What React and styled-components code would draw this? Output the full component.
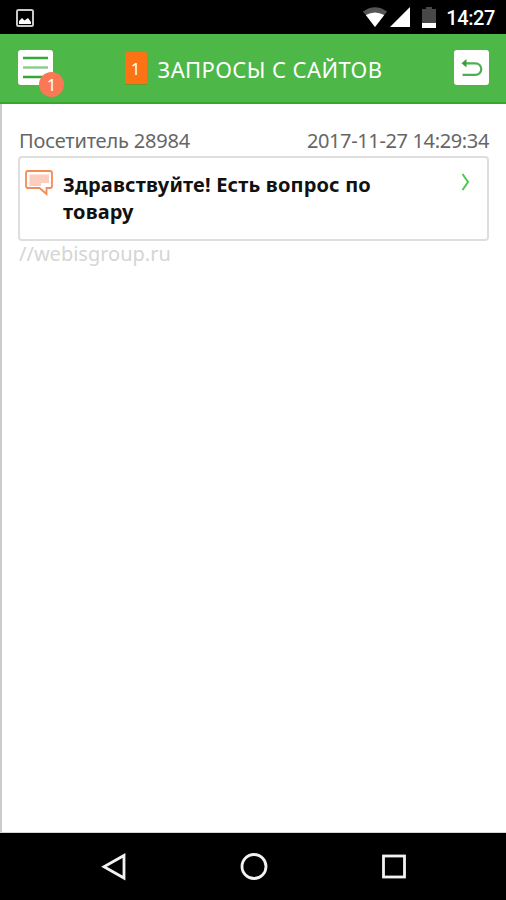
import React from 'react';
import styled, { createGlobalStyle } from 'styled-components';

const requests = [
  {
    id: 28984,
    visitor: 'Посетитель 28984',
    date: '2017-11-27 14:29:34',
    message: 'Здравствуйте! Есть вопрос по товару',
    site: '//webisgroup.ru',
  },
];

function StatusBar() {
  return (
    <Status>
      <svg className="picture" width="18" height="18" viewBox="0 0 18 18">
        <rect x="1" y="1" width="16" height="16" rx="1.5" fill="none" stroke="#c9c9c9" strokeWidth="2" />
        <path d="M3 15v-3l3-3 2.500 2.500L12 9l3 4v2z" fill="#fff" />
      </svg>
      <div className="indicators">
        <svg width="24" height="20" viewBox="0 0 24 20">
          <path d="M0 4.500Q12-4 24 4.500L12 20z" fill="#555" />
          <path d="M2.800 8Q12 2.800 21.200 8L12 20z" fill="#fff" />
        </svg>
        <svg className="signal" width="20" height="20" viewBox="0 0 20 20">
          <path d="M20 0v20H0z" fill="#fff" />
        </svg>
        <svg className="battery" width="14" height="21" viewBox="0 0 14 21">
          <path d="M4 0h6v2h4v14H0V2h4z" fill="#484848" />
          <path d="M0 16h14v5H0z" fill="#fff" />
        </svg>
        <span className="clock">14:27</span>
      </div>
    </Status>
  );
}

function Header({ count }) {
  return (
    <HeaderBar>
      <IconButton aria-label="Меню">
        <svg width="35" height="35" viewBox="0 0 35 35" fill="none" strokeWidth="2.400">
          <path d="M5 8h25M5 27h25" stroke="#35a935" />
          <path d="M5 17.500h25" stroke="#8bcb8b" />
        </svg>
        <Badge>{count}</Badge>
      </IconButton>
      <Title>
        <Counter>{count}</Counter>
        <h1>ЗАПРОСЫ С САЙТОВ</h1>
      </Title>
      <IconButton aria-label="Назад">
        <svg width="35" height="35" viewBox="0 0 35 35">
          <path d="M10 13.300h11.500a5.800 5.800 0 0 1 0 11.600H8.500" fill="none" stroke="#4caf50" strokeWidth="2.200" />
          <path d="M7.500 13.300l5-4.300v8.600z" fill="#35a13a" />
        </svg>
      </IconButton>
    </HeaderBar>
  );
}

function Request({ request }) {
  return (
    <RequestItem>
      <div className="info">
        <span className="visitor">{request.visitor}</span>
        <span className="date">{request.date}</span>
      </div>
      <Card>
        <svg className="bubble" width="28" height="26" viewBox="0 0 28 26">
          <path
            d="M3 1h22q2 0 2 2v13q0 2-2 2h-3.500v6L14.500 18H3q-2 0-2-2V3q0-2 2-2z"
            fill="#fff"
            stroke="#f58b52"
            strokeWidth="1.800"
          />
          <path d="M4.500 4.500h19.500v8.500h-8v3H4.500z" fill="#fdcdbd" />
        </svg>
        <p>{request.message}</p>
        <svg className="arrow" width="9" height="18" viewBox="0 0 9 18">
          <path d="M1.500 1l5.500 8-5.500 8" fill="none" stroke="#50c653" strokeWidth="2" />
        </svg>
      </Card>
      <div className="site">{request.site}</div>
    </RequestItem>
  );
}

function NavigationBar() {
  return (
    <Navigation>
      <svg width="28" height="28" viewBox="0 0 28 28">
        <path d="M24 2.500v22.500L4 13.800z" />
      </svg>
      <svg width="28" height="28" viewBox="0 0 28 28">
        <circle cx="14" cy="13.500" r="12" />
      </svg>
      <svg width="28" height="28" viewBox="0 0 28 28">
        <rect x="3.500" y="3" width="21" height="21" />
      </svg>
    </Navigation>
  );
}

export default function App() {
  return (
    <Screen>
      <GlobalStyle />
      <StatusBar />
      <Header count={requests.length} />
      <Content>
        {requests.map((request) => (
          <Request key={request.id} request={request} />
        ))}
      </Content>
      <NavigationBar />
    </Screen>
  );
}

const GlobalStyle = createGlobalStyle`
  * {
    box-sizing: border-box;
  }

  body {
    margin: 0;
    font-family: 'Noto Sans', sans-serif;
  }

  svg {
    display: block;
    flex-shrink: 0;
  }
`;

const Screen = styled.div`
  display: flex;
  flex-direction: column;
  width: 506px;
  height: 900px;
  overflow: hidden;
  background-color: #ffffff;
`;

const Status = styled.div`
  display: flex;
  justify-content: space-between;
  height: 34px;
  padding: 0 11px 0 16px;
  background-color: #000000;

  .picture {
    margin-top: 9px;
  }

  .indicators {
    display: flex;
    padding-top: 7px;
  }

  .signal {
    margin-left: 3px;
  }

  .battery {
    margin-left: 12px;
  }

  .clock {
    margin-left: 10px;
    color: #ffffff;
    font-family: Roboto, sans-serif;
    font-size: 20px;
    font-weight: 500;
    letter-spacing: -0.4px;
    line-height: 23px;
    white-space: nowrap;
  }
`;

const HeaderBar = styled.header`
  display: flex;
  align-items: center;
  justify-content: space-between;
  height: 70px;
  padding: 0 17px 0 18px;
  background-color: #4db748;
  border-bottom: 2px solid #35a82d;
`;

const IconButton = styled.button`
  position: relative;
  width: 35px;
  height: 35px;
  margin-top: -1px;
  padding: 0;
  border: none;
  border-radius: 3px;
  background-color: #ffffff;
`;

const Badge = styled.span`
  position: absolute;
  top: 22px;
  left: 21px;
  width: 25px;
  height: 25px;
  border-radius: 50%;
  background-color: #fb7855;
  color: #ffffff;
  font-family: 'Noto Sans', sans-serif;
  font-size: 17px;
  line-height: 26px;
  text-align: center;
`;

const Title = styled.div`
  display: flex;
  align-items: center;
  gap: 11px;

  h1 {
    margin: 2px 0 0;
    color: #ffffff;
    font-size: 22px;
    font-weight: 400;
    letter-spacing: 0.38px;
    line-height: 32px;
    white-space: nowrap;
  }
`;

const Counter = styled.span`
  width: 22px;
  height: 33px;
  border-radius: 2px;
  background-color: #fc7315;
  border-bottom: 1px solid #68962c;
  color: #ffffff;
  font-size: 17px;
  line-height: 33px;
  text-align: center;
`;

const Content = styled.main`
  flex: 1;
  padding: 23px 17px 0 16px;
  border-left: 2px solid #cccccc;
  border-bottom: 1px solid #d5d5d5;
`;

const RequestItem = styled.div`
  font-size: 20px;

  .info {
    display: flex;
    justify-content: space-between;
    padding-left: 1px;
    color: #666666;
    line-height: 28px;
    margin-bottom: 1px;
  }

  .visitor {
    letter-spacing: -0.18px;
  }

  .date {
    letter-spacing: -0.36px;
  }

  .site {
    padding-left: 1px;
    color: #d5d5d5;
    line-height: 26px;
  }
`;

const Card = styled.div`
  display: flex;
  align-items: flex-start;
  height: 85px;
  padding: 12px 17px 0 5px;
  border: 2px solid #dedede;
  border-radius: 4px;

  p {
    flex: 1;
    margin: 1px 50px 0 10px;
    color: #111111;
    font-size: 20px;
    font-weight: 700;
    letter-spacing: 0.17px;
    line-height: 27px;
  }

  .arrow {
    margin-top: 3px;
  }
`;

const Navigation = styled.nav`
  display: flex;
  justify-content: center;
  gap: 112px;
  height: 67px;
  padding: 20px 0 0 2px;
  background-color: #000000;

  svg {
    fill: none;
    stroke: #f2f2f2;
    stroke-width: 2.8;
  }
`;
